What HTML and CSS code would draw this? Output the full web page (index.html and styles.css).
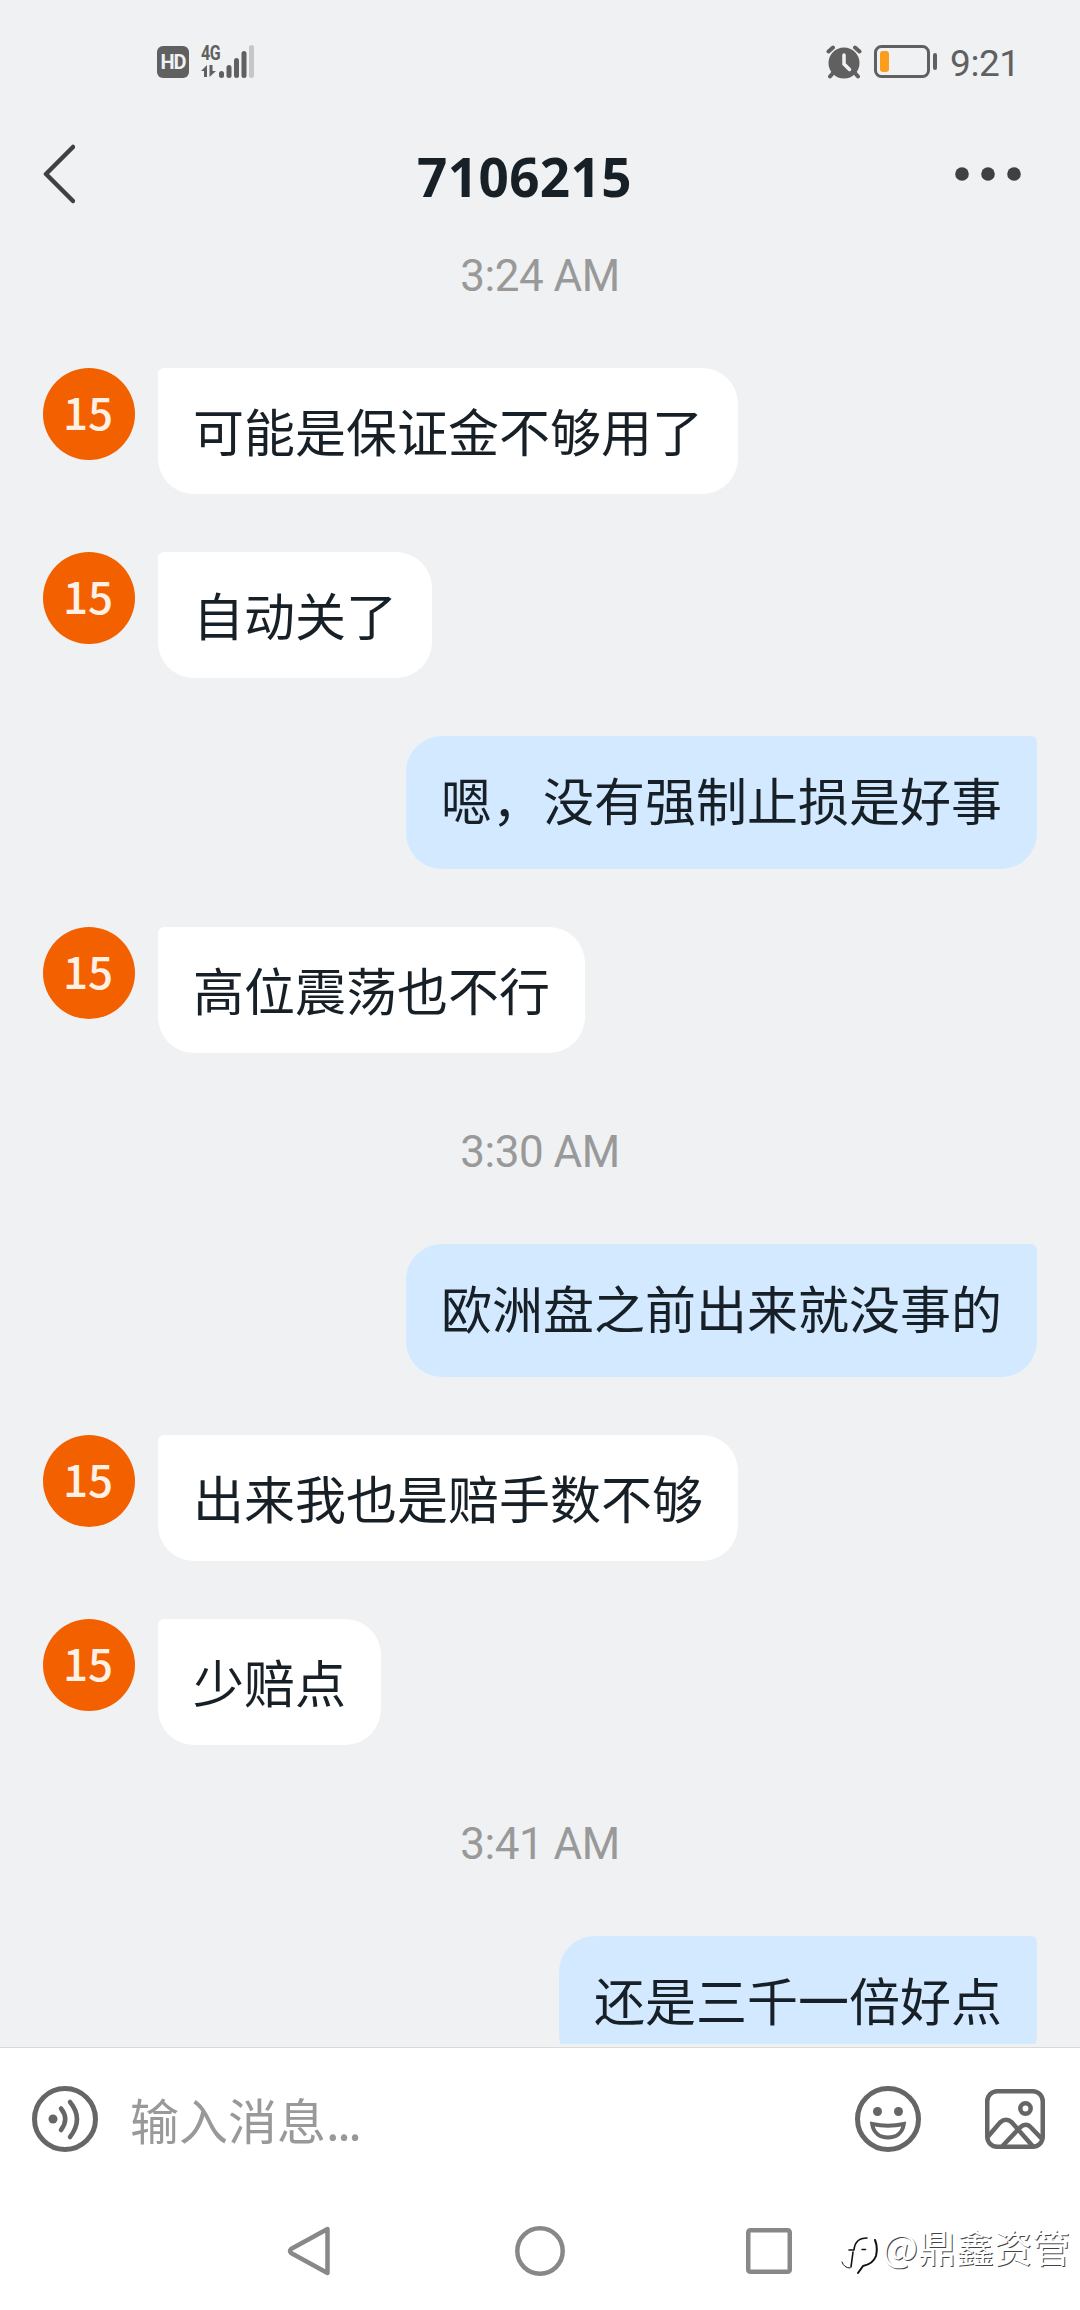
FILE: index.html
```html
<!DOCTYPE html>
<html lang="zh-CN">
<head>
<meta charset="utf-8">
<title>7106215</title>
<link rel="stylesheet" href="styles.css">
</head>
<body>
<div class="screen">
  <header class="status">
    <div class="status-left">
      <span class="hd">HD</span>
      <span class="network">
        <span class="gen">4G</span>
        <svg class="signal" width="54" height="34" viewBox="0 0 54 34"><g fill="#606060"><path d="M0 26 6 20V32H3V26ZM8.500 20H11.500V26H15L8.500 32Z"/><rect x="18" y="26" width="5" height="7" rx="2.500"/><rect x="25.500" y="20" width="5" height="13" rx="2.500"/><rect x="33" y="13" width="5" height="20" rx="2.500"/><rect x="40.500" y="6" width="5" height="27" rx="2.500"/></g><rect x="48" y="0" width="5" height="33" rx="2.500" fill="#c6c7c9"/></svg>
      </span>
    </div>
    <div class="status-right">
      <svg width="36" height="34" viewBox="0 0 36 34"><circle cx="18" cy="18" r="15.500" fill="#606060"/><path d="M2.500 6.500 7 2.500M33.500 6.500 29 2.500" stroke="#606060" stroke-width="4" stroke-linecap="round"/><path d="M7 28 4 31.500M29 28 32 31.500" stroke="#606060" stroke-width="4" stroke-linecap="round"/><path d="M18 10V19L23.500 24.500" fill="none" stroke="#eff1f3" stroke-width="3.500" stroke-linecap="round"/></svg>
      <svg width="64" height="34" viewBox="0 0 64 34"><rect x="1.500" y="1.500" width="53" height="30" rx="6" fill="none" stroke="#606060" stroke-width="3"/><rect x="6" y="6" width="9" height="21" rx="3" fill="#fd9d1e"/><rect x="59" y="8" width="4" height="17" rx="2" fill="#606060"/></svg>
      <span class="clock">9:21</span>
    </div>
  </header>
  <nav class="titlebar">
    <svg width="34" height="62" viewBox="0 0 34 62"><path d="M32 4 5 31 32 58" fill="none" stroke="#404040" stroke-width="4.500" stroke-linecap="round" stroke-linejoin="round"/></svg>
    <h1 class="title">7106215</h1>
    <svg width="66" height="14" viewBox="0 0 66 14" fill="#404040"><circle cx="7" cy="7" r="6.800"/><circle cx="33" cy="7" r="6.800"/><circle cx="59" cy="7" r="6.800"/></svg>
  </nav>
  <main class="chat">
    <time class="time">3:24 AM</time>
    <div class="row"><span class="avatar">15</span><p class="bubble">可能是保证金不够用了</p></div>
    <div class="row"><span class="avatar">15</span><p class="bubble">自动关了</p></div>
    <div class="row mine"><p class="bubble">嗯，没有强制止损是好事</p></div>
    <div class="row"><span class="avatar">15</span><p class="bubble">高位震荡也不行</p></div>
    <time class="time">3:30 AM</time>
    <div class="row mine"><p class="bubble">欧洲盘之前出来就没事的</p></div>
    <div class="row"><span class="avatar">15</span><p class="bubble">出来我也是赔手数不够</p></div>
    <div class="row"><span class="avatar">15</span><p class="bubble">少赔点</p></div>
    <time class="time">3:41 AM</time>
    <div class="row mine"><p class="bubble">还是三千一倍好点</p></div>
  </main>
  <section class="composer">
    <svg width="66" height="66" viewBox="0 0 66 66" fill="none" stroke="#666" stroke-width="5"><circle cx="33" cy="33" r="30.500"/><circle cx="21" cy="33" r="4.500" fill="#666" stroke="none"/><g stroke-width="4.500" stroke-linecap="round"><path d="M29 22.500Q37.500 33 29 44"/><path d="M38 16Q52 33 38 51"/></g></svg>
    <span class="placeholder">输入消息<span class="dots">...</span></span>
    <svg class="smile" width="66" height="66" viewBox="0 0 66 66" fill="none" stroke="#666" stroke-width="5"><circle cx="33" cy="33" r="30.500"/><g fill="#666" stroke="none"><circle cx="22.500" cy="25.500" r="4.500"/><circle cx="43.500" cy="25.500" r="4.500"/></g><path d="M17.200 38Q33 41.500 48.800 38C47.500 47 41 51.500 33 51.500S18.500 47 17.200 38Z" stroke-width="4"/></svg>
    <svg width="60" height="60" viewBox="0 0 60 60" fill="none" stroke="#666" stroke-width="4.500"><rect x="2.250" y="2.250" width="55.500" height="55.500" rx="10"/><circle cx="40.500" cy="19.500" r="5.200"/><path d="M3 47.500 15 33.500Q21 28 27 33.500L48 57.500M17.500 57 35 38.500Q41 33 46 38.500L57 50"/></svg>
  </section>
  <footer class="navbar">
    <svg width="44" height="52" viewBox="0 0 44 52"><path d="M40.500 4V48L4 28Q2 26 4 24Z" fill="none" stroke="#888" stroke-width="4.500" stroke-linejoin="round"/></svg>
    <svg width="50" height="50" viewBox="0 0 50 50"><circle cx="25" cy="25" r="22.700" fill="none" stroke="#888" stroke-width="4.500"/></svg>
    <svg width="46" height="46" viewBox="0 0 46 46"><rect x="2.250" y="2.250" width="41.500" height="41.500" rx="2" fill="none" stroke="#888" stroke-width="4.500"/></svg>
    <div class="watermark">
      <svg width="38" height="40" viewBox="0 0 38 40" fill="none" stroke="#111" stroke-linecap="round" stroke-linejoin="round"><path stroke-width="1" d="M1 27Q3 33 9 33"/><path stroke-width="1.600" d="M10 32 12 17M8 15H13Q14 3 26 3M21 14.500H24.500"/><path stroke-width="2" d="M34 5Q37 12 35 21Q32 29 22 31L17 38"/></svg>
      <span>@鼎鑫资管</span>
    </div>
  </footer>
</div>
</body>
</html>
```
FILE: styles.css
```css
* { box-sizing: border-box; }

body {
  margin: 0;
  background: #eff1f3;
  font-family: "Noto Sans", "Noto Sans CJK SC", sans-serif;
}

svg { display: block; flex: none; }

.screen {
  display: flex;
  flex-direction: column;
  width: 1080px;
  height: 2310px;
  overflow: hidden;
}

.status {
  display: flex;
  justify-content: space-between;
  height: 124px;
  padding: 45px 63px 0 157px;
  color: #606060;
}

.status-left, .status-right { display: flex; align-items: flex-start; }
.status-left { gap: 12px; }

.hd {
  width: 32px;
  height: 32px;
  margin-top: 1px;
  border-radius: 6px;
  background: #606060;
  color: #eff1f3;
  font: 700 20px/33px "Roboto", sans-serif;
  letter-spacing: -1px;
  text-align: center;
}

.network { position: relative; }
.gen {
  position: absolute;
  left: 0;
  top: -2px;
  font: 700 20px/20px "Roboto", sans-serif;
  letter-spacing: -.5px;
  transform: scaleX(.8);
  transform-origin: 0 0;
}

.status-right > svg:first-child { margin-right: 12px; }
.clock {
  width: 67px;
  margin-left: 12px;
  font: 400 37px/38px "Roboto", sans-serif;
  letter-spacing: -.4px;
  white-space: nowrap;
}

.titlebar {
  display: flex;
  align-items: center;
  justify-content: space-between;
  height: 100px;
  padding: 0 59px 0 41px;
}

.title {
  margin: 6px 0 0 19px;
  color: #182027;
  font-size: 53px;
  line-height: 58px;
  font-weight: 700;
  letter-spacing: .4px;
}

.chat {
  height: 1820px;
  overflow: hidden;
  padding: 20px 43px 0;
}

.time {
  display: block;
  height: 66px;
  margin: 0 0 58px;
  color: #999;
  font: 400 44px/64px "Roboto", sans-serif;
  letter-spacing: -.5px;
  text-align: center;
}

.row {
  display: flex;
  align-items: flex-start;
  gap: 23px;
  margin-bottom: 58px;
}
.row + .time { margin-top: 67px; }

.avatar {
  width: 92px;
  height: 92px;
  padding-right: 2px;
  border-radius: 50%;
  background: #f26000;
  color: #fff0e6;
  font: 500 44px/87px "Noto Sans CJK SC", sans-serif;
  text-align: center;
}

.bubble {
  height: 126px;
  margin: 0;
  padding: 0 35px;
  border-radius: 6px 36px 36px 36px;
  background: #fff;
  color: #182027;
  font: 400 51px/125px "Noto Sans CJK SC", sans-serif;
  white-space: nowrap;
}

.mine { justify-content: flex-end; }
.mine .bubble {
  height: 133px;
  border-radius: 36px 6px 36px 36px;
  background: #d2e9ff;
  line-height: 127px;
}

.composer {
  display: flex;
  align-items: center;
  height: 145px;
  margin-top: 3px;
  padding: 0 35px 2px 32px;
  border-top: 1px solid #d9d9d9;
  background: #fff;
}

.placeholder {
  margin-left: 32px;
  color: #999;
  font: 400 49px/66px "Noto Sans CJK SC", sans-serif;
}
.dots { letter-spacing: -2.500px; }
.smile { margin: 0 64px 0 auto; }

.navbar {
  display: flex;
  align-items: center;
  flex: 1;
  padding: 0 0 0 287px;
  background: #fff;
}
.navbar > svg + svg { margin-left: 184px; }
.navbar > svg:nth-child(3) { margin-left: 181px; }

.watermark {
  display: flex;
  align-items: center;
  gap: 3px;
  margin-left: 49px;
  color: #fff;
  font: 400 38px/48px "Noto Sans CJK SC", sans-serif;
  text-shadow: 1px 1px .5px #444;
  white-space: nowrap;
}
.watermark svg { margin-top: 8px; }
.watermark span { margin-bottom: 10px; }
```
